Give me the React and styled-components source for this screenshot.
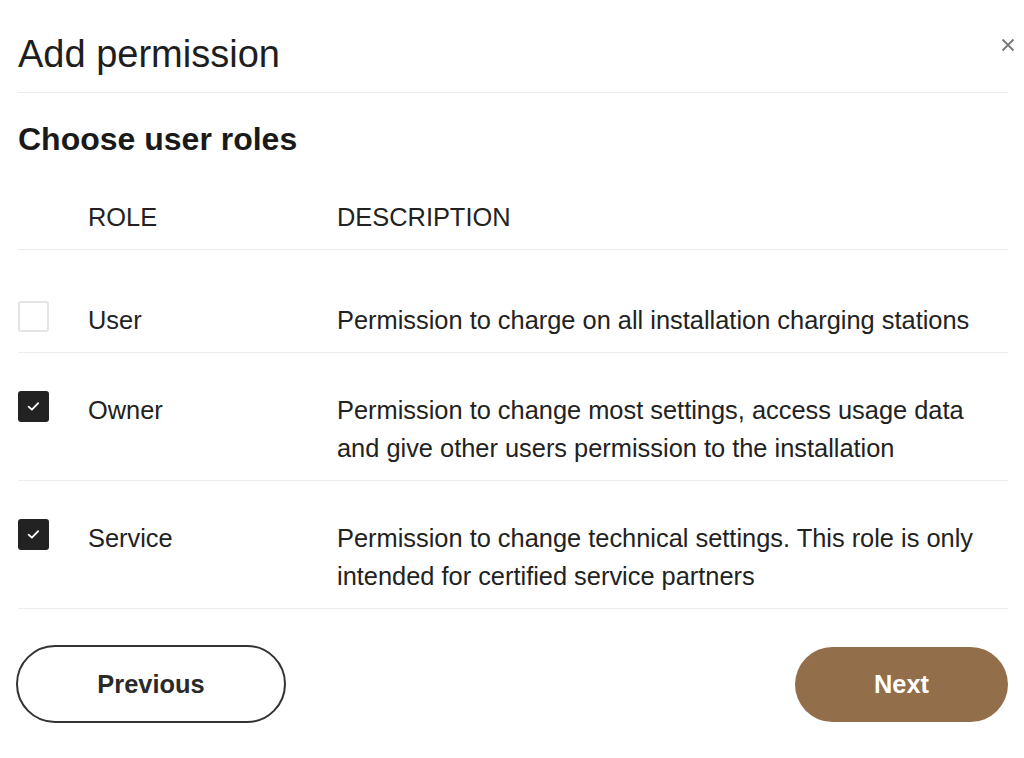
import styled, { createGlobalStyle } from "styled-components"

const Global = createGlobalStyle`
  html, body { margin: 0; padding: 0; background: #fff; }
  body { font-family: "Liberation Sans", Arial, sans-serif; color: #222; }
`;

const Modal = styled.div`
  width: 1024px;
  height: 758px;
  box-sizing: border-box;
  padding: 0 16px 0 18px;
  display: flex;
  flex-direction: column;
`;

const Header = styled.div`
  display: flex;
  justify-content: space-between;
  align-items: flex-start;
  padding: 31px 0 15px;
  border-bottom: 1px solid #ebebeb;
`;

const Title = styled.h2`
  margin: 0;
  font-size: 38px;
  line-height: 46px;
  font-weight: 400;
  color: #1e1e1e;
`;

const Close = styled.button`
  border: none;
  background: none;
  padding: 0;
  margin: 7px -7px 0 0;
  width: 14px;
  height: 14px;
  cursor: pointer;
  display: flex;
`;

const SubTitle = styled.h3`
  margin: 27px 0 0;
  font-size: 32px;
  line-height: 38px;
  font-weight: 700;
  color: #1a1a1a;
`;

const Row = styled.div`
  display: grid;
  grid-template-columns: 70px 249px 1fr;
  align-items: start;
  font-size: 25.4px;
  line-height: 38.4px;
  border-bottom: 1px solid #ebebef;
  padding: ${(p) => p.$top}px 0 ${(p) => p.$bottom}px;
`;

const HeadCell = styled.div`
  text-transform: uppercase;
  color: #222;
`;

const Cell = styled.div`
  color: #222;
`;

const Box = styled.span`
  display: flex;
  align-items: center;
  justify-content: center;
  box-sizing: border-box;
  width: 31px;
  height: 31px;
  border-radius: 3px;
  border: ${(p) => (p.$checked ? "none" : "2px solid #e4e4e4")};
  background: ${(p) => (p.$checked ? "#222" : "#fff")};
`;

const Footer = styled.div`
  display: flex;
  justify-content: space-between;
  align-items: center;
  margin-top: 36px;
`;

const Button = styled.button`
  box-sizing: border-box;
  font-family: "Liberation Sans", Arial, sans-serif;
  font-size: 25.4px;
  font-weight: 700;
  border-radius: 40px;
  cursor: pointer;
  width: ${(p) => p.$w}px;
  height: ${(p) => p.$h}px;
  border: ${(p) => (p.$primary ? "none" : "2px solid #333")};
  background: ${(p) => (p.$primary ? "#936e4a" : "#fff")};
  color: ${(p) => (p.$primary ? "#fff" : "#2a2a2a")};
  margin-left: ${(p) => p.$ml || 0}px;
`;

const roles = [
  { name: "User", checked: false, top: 51, bottom: 12, text: "Permission to charge on all installation charging stations" },
  { name: "Owner", checked: true, top: 38, bottom: 12, text: "Permission to change most settings, access usage data and give other users permission to the installation" },
  { name: "Service", checked: true, top: 38, bottom: 13, text: "Permission to change technical settings. This role is only intended for certified service partners" },
];

function Check() {
  return (
    <svg width="13" height="11" viewBox="0 0 13 11" fill="none">
      <path d="M1.6 5.6 L4.9 8.6 L11.2 2.2" stroke="#fff" strokeWidth="1.8" strokeLinecap="round" strokeLinejoin="round" />
    </svg>
  );
}

function App() {
  return (
    <Modal>
      <Global />
      <Header>
        <Title>Add permission</Title>
        <Close aria-label="Close">
          <svg width="14" height="14" viewBox="0 0 14 14">
            <path d="M1.5 1.5 L12.5 12.5 M12.5 1.5 L1.5 12.5" stroke="#777" strokeWidth="1.8" />
          </svg>
        </Close>
      </Header>
      <SubTitle>Choose user roles</SubTitle>
      <Row $top={40} $bottom={13}>
        <div />
        <HeadCell>Role</HeadCell>
        <HeadCell>Description</HeadCell>
      </Row>
      {roles.map((r) => (
        <Row key={r.name} $top={r.top} $bottom={r.bottom}>
          <Box $checked={r.checked}>{r.checked && <Check />}</Box>
          <Cell>{r.name}</Cell>
          <Cell>{r.text}</Cell>
        </Row>
      ))}
      <Footer>
        <Button $w={270} $h={78} $ml={-2}>Previous</Button>
        <Button $primary $w={213} $h={75}>Next</Button>
      </Footer>
    </Modal>
  );
}

export default App
